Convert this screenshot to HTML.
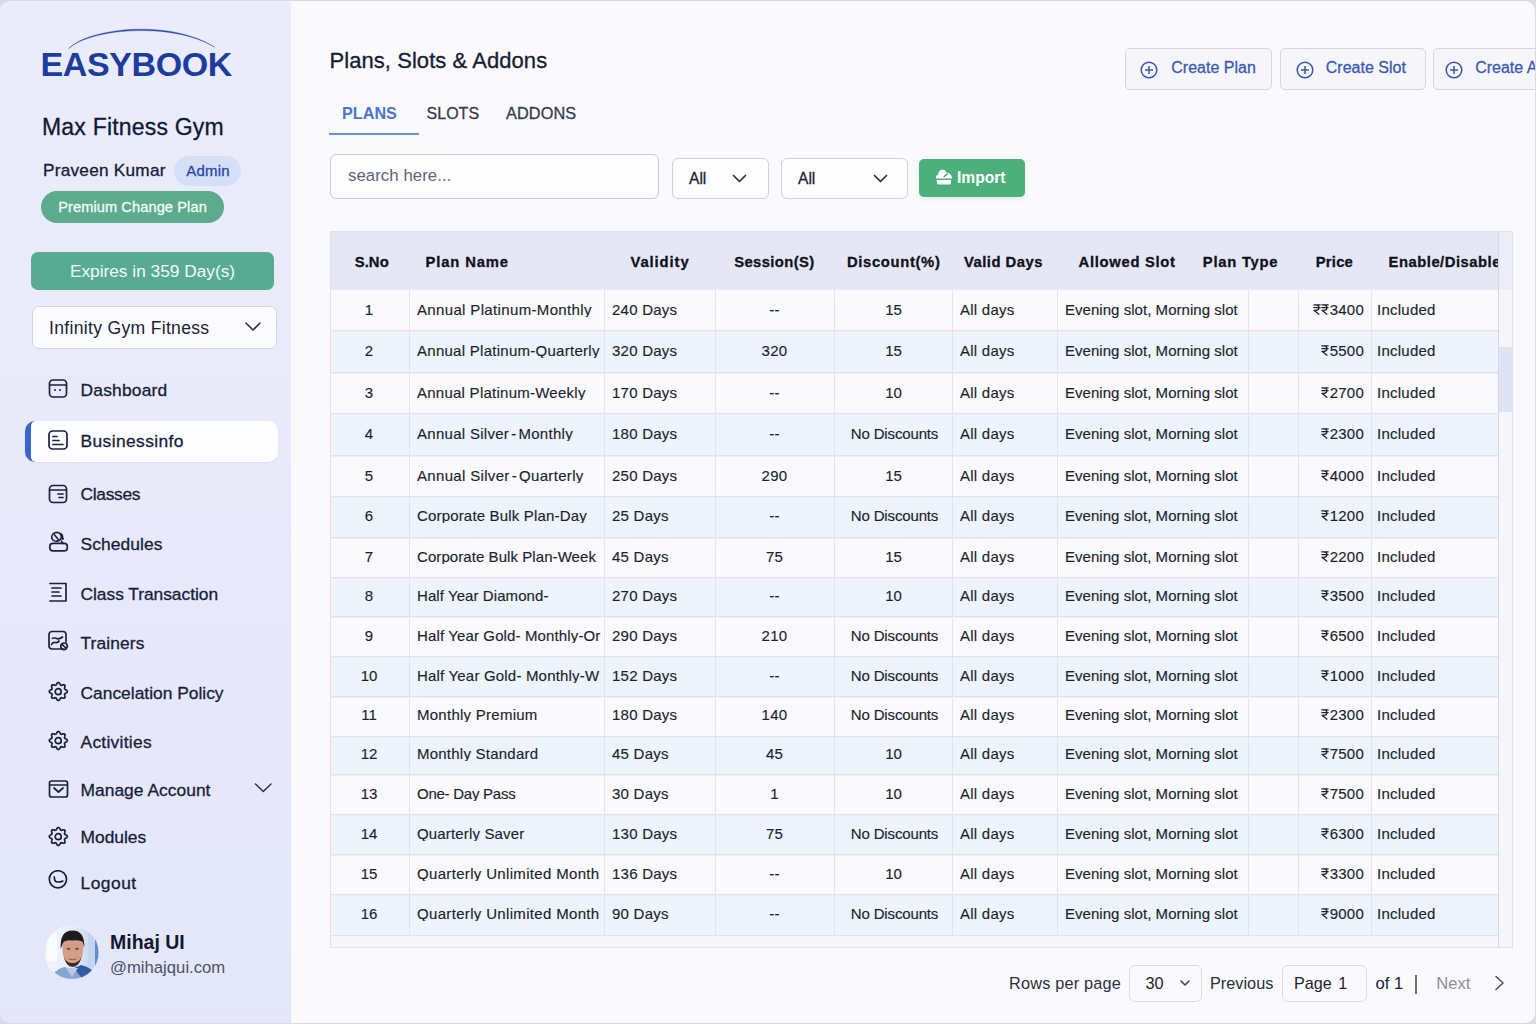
<!DOCTYPE html>
<html><head><meta charset="utf-8"><title>Plans, Slots &amp; Addons</title>
<style>
html,body{margin:0;padding:0;}
body{width:1536px;height:1024px;position:relative;overflow:hidden;background:#d9dae3;font-family:"Liberation Sans",sans-serif;}
.r{position:absolute;}
.t{position:absolute;line-height:1;white-space:pre;}
.m{-webkit-text-stroke:0.3px currentColor;}
.tb{-webkit-text-stroke:0.15px currentColor;}
.rs{display:inline-block;vertical-align:baseline;margin-right:0.5px;}
</style></head><body>
<div class="r" style="left:0;top:0;width:1536px;height:1024px;clip-path:inset(1px 1px 1px 0 round 10px);">
<div class="r" style="left:0px;top:0px;width:291px;height:1024px;background:linear-gradient(180deg,#ebecfb 0%,#e8e9fa 50%,#e3e7f9 100%);"></div>
<div class="r" style="left:291px;top:0px;width:1245px;height:1024px;background:#fafafd;"></div>
<svg class="r" style="left:60px;top:24px;" width="165" height="28" viewBox="0 0 165 28"><path d="M8.7 24.6 C 28 4, 110 -5.5, 154.8 23.2 C 110 -3.6, 28 5.6, 8.7 24.6 Z" fill="#2549a9" stroke="#2549a9" stroke-width="0.4"/></svg>
<div class="t" style="left:40.5px;top:46.80px;font-size:34px;color:#1c3d9e;font-weight:700;letter-spacing:-0.4px;">EASYBOOK</div>
<div class="t m" style="left:42.0px;top:116.10px;font-size:23px;color:#111834;letter-spacing:0.2px;">Max Fitness Gym</div>
<div class="t m" style="left:43.0px;top:161.61px;font-size:17.2px;color:#141b38;letter-spacing:0.25px;">Praveen Kumar</div>
<div class="r" style="left:174px;top:156px;width:67px;height:30px;background:#d5dff6;border-radius:15px;"></div>
<div class="t m" style="left:174.5px;top:162.61px;font-size:15px;color:#2546a6;letter-spacing:0.15px;width:67px;text-align:center;">Admin</div>
<div class="r" style="left:41px;top:191px;width:183px;height:32px;background:#5bab8c;border-radius:16px;"></div>
<div class="t m" style="left:41.0px;top:199.71px;font-size:14.6px;color:#f4fbf7;letter-spacing:0.1px;width:183px;text-align:center;">Premium Change Plan</div>
<div class="r" style="left:31px;top:252px;width:243px;height:38px;background:#58aa90;border-radius:7px;"></div>
<div class="t" style="left:31.0px;top:263.30px;font-size:17.3px;color:#f2faf6;width:243px;text-align:center;">Expires in 359 Day(s)</div>
<div class="r" style="left:32px;top:306px;width:245px;height:43px;background:#fcfcfe;border:1px solid #d3d5e2;border-radius:7px;box-sizing:border-box;"></div>
<div class="t" style="left:49.0px;top:319.51px;font-size:17.6px;color:#1a2038;letter-spacing:0.3px;">Infinity Gym Fitness</div>
<svg class="r" style="left:244px;top:320px;" width="20" height="14" viewBox="0 0 20 14"><path d="M2 3 L9 10 L16 3" fill="none" stroke="#2a3150" stroke-width="1.6" stroke-linecap="round" stroke-linejoin="round"/></svg>
<div class="r" style="left:25px;top:421px;width:253px;height:41px;background:#fdfdff;border-radius:10px;box-shadow:0 1px 2px rgba(120,130,180,0.12);"></div>
<div class="r" style="left:25px;top:421px;width:11px;height:41px;background:#3a64c8;border-radius:10px 0 0 10px;"></div>
<div class="r" style="left:31px;top:421px;width:9px;height:41px;background:#fdfdff;border-radius:5px 0 0 5px;"></div>
<div class="t m" style="left:80.5px;top:382.00px;font-size:17.4px;color:#161d3b;letter-spacing:0.2px;">Dashboard</div>
<div class="t m" style="left:80.5px;top:433.31px;font-size:17.4px;color:#161d3b;letter-spacing:0.4px;">Businessinfo</div>
<div class="t m" style="left:80.5px;top:486.00px;font-size:17.4px;color:#161d3b;letter-spacing:-0.3px;">Classes</div>
<div class="t m" style="left:80.5px;top:535.70px;font-size:17.4px;color:#161d3b;letter-spacing:0.08px;">Schedules</div>
<div class="t m" style="left:80.5px;top:586.20px;font-size:17.4px;color:#161d3b;letter-spacing:-0.04px;">Class Transaction</div>
<div class="t m" style="left:80.5px;top:634.61px;font-size:17.4px;color:#161d3b;letter-spacing:0.12px;">Trainers</div>
<div class="t m" style="left:80.5px;top:684.50px;font-size:17.4px;color:#161d3b;">Cancelation Policy</div>
<div class="t m" style="left:80.5px;top:733.50px;font-size:17.4px;color:#161d3b;letter-spacing:0.28px;">Activities</div>
<div class="t m" style="left:80.5px;top:781.81px;font-size:17.4px;color:#161d3b;letter-spacing:0.03px;">Manage Account</div>
<div class="t m" style="left:80.5px;top:829.31px;font-size:17.4px;color:#161d3b;">Modules</div>
<div class="t m" style="left:80.5px;top:874.91px;font-size:17.4px;color:#161d3b;letter-spacing:0.5px;">Logout</div>
<svg class="r" style="left:47px;top:378px;" width="24" height="22" viewBox="0 0 24 22"><rect x="2.5" y="2" width="17" height="17" rx="3.5" fill="none" stroke="#1a2140" stroke-width="1.7" stroke-linecap="round" stroke-linejoin="round"/><line x1="3" y1="7" x2="19" y2="7" fill="none" stroke="#1a2140" stroke-width="1.7" stroke-linecap="round" stroke-linejoin="round"/><circle cx="8" cy="12" r="1" fill="#1a2140"/><circle cx="13" cy="12" r="1" fill="#1a2140"/></svg>
<svg class="r" style="left:47px;top:429px;" width="24" height="22" viewBox="0 0 24 22"><rect x="2" y="2" width="18" height="18" rx="3.5" fill="none" stroke="#1a2140" stroke-width="1.7" stroke-linecap="round" stroke-linejoin="round"/><line x1="6" y1="7.5" x2="10" y2="7.5" fill="none" stroke="#1a2140" stroke-width="1.7" stroke-linecap="round" stroke-linejoin="round"/><line x1="6" y1="11.5" x2="12" y2="11.5" fill="none" stroke="#1a2140" stroke-width="1.7" stroke-linecap="round" stroke-linejoin="round"/><line x1="6" y1="15.5" x2="16" y2="15.5" fill="none" stroke="#1a2140" stroke-width="1.7" stroke-linecap="round" stroke-linejoin="round"/></svg>
<svg class="r" style="left:47px;top:483px;" width="24" height="22" viewBox="0 0 24 22"><rect x="2.5" y="2.5" width="17" height="17" rx="3.5" fill="none" stroke="#1a2140" stroke-width="1.7" stroke-linecap="round" stroke-linejoin="round"/><line x1="3" y1="7" x2="19" y2="7" fill="none" stroke="#1a2140" stroke-width="1.7" stroke-linecap="round" stroke-linejoin="round"/><line x1="11" y1="11" x2="16" y2="11" fill="none" stroke="#1a2140" stroke-width="1.7" stroke-linecap="round" stroke-linejoin="round"/><line x1="12" y1="14.5" x2="16" y2="14.5" fill="none" stroke="#1a2140" stroke-width="1.7" stroke-linecap="round" stroke-linejoin="round"/></svg>
<svg class="r" style="left:47px;top:531px;" width="24" height="22" viewBox="0 0 24 22"><ellipse cx="9.5" cy="5.8" rx="4.8" ry="4.3" transform="rotate(-20 9.5 5.8)" fill="none" stroke="#1a2140" stroke-width="1.7" stroke-linecap="round" stroke-linejoin="round"/><path d="M7.5 4 L11 8" fill="none" stroke="#1a2140" stroke-width="1.7" stroke-linecap="round" stroke-linejoin="round"/><path d="M13 2.5 Q15.3 3 15.5 5.5 L15.5 7.5" fill="none" stroke="#1a2140" stroke-width="1.7" stroke-linecap="round" stroke-linejoin="round"/><circle cx="15.6" cy="7.8" r="1.3" fill="#1a2140"/><path d="M14.5 10.2 L15.8 12.5" fill="none" stroke="#1a2140" stroke-width="1.7" stroke-linecap="round" stroke-linejoin="round"/><rect x="2.8" y="12.3" width="17.5" height="7.6" rx="3.2" fill="none" stroke="#1a2140" stroke-width="1.7" stroke-linecap="round" stroke-linejoin="round"/></svg>
<svg class="r" style="left:47px;top:581px;" width="24" height="22" viewBox="0 0 24 22"><path d="M3 2.5 H19 V20 H3" fill="none" stroke="#1a2140" stroke-width="1.7" stroke-linecap="round" stroke-linejoin="round"/><line x1="5" y1="7" x2="14" y2="7" fill="none" stroke="#1a2140" stroke-width="1.7" stroke-linecap="round" stroke-linejoin="round"/><line x1="5" y1="11" x2="12" y2="11" fill="none" stroke="#1a2140" stroke-width="1.7" stroke-linecap="round" stroke-linejoin="round"/><line x1="5" y1="15" x2="14" y2="15" fill="none" stroke="#1a2140" stroke-width="1.7" stroke-linecap="round" stroke-linejoin="round"/></svg>
<svg class="r" style="left:47px;top:630px;" width="24" height="22" viewBox="0 0 24 22"><path d="M16 19 H5 a3 3 0 0 1 -3 -3 V4.5 a3 3 0 0 1 3 -3 H16 a3 3 0 0 1 3 3 V12" fill="none" stroke="#1a2140" stroke-width="1.7" stroke-linecap="round" stroke-linejoin="round"/><path d="M5.5 8.3 Q8 7.5 10.5 8.8 Q13 9 15.5 7" fill="none" stroke="#1a2140" stroke-width="1.7" stroke-linecap="round" stroke-linejoin="round"/><path d="M4.5 14.5 Q5.5 12 8.5 12.5 Q11 13 12 11" fill="none" stroke="#1a2140" stroke-width="1.7" stroke-linecap="round" stroke-linejoin="round"/><circle cx="17" cy="16.3" r="3.3" fill="none" stroke="#1a2140" stroke-width="1.7" stroke-linecap="round" stroke-linejoin="round"/><line x1="15.3" y1="14.6" x2="18.8" y2="18" fill="none" stroke="#1a2140" stroke-width="1.7" stroke-linecap="round" stroke-linejoin="round"/></svg>
<svg class="r" style="left:47px;top:681px;" width="24" height="22" viewBox="0 0 24 22"><path d="M11.30 1.45 L11.88 1.62 L12.41 2.10 L12.84 2.75 L13.20 3.42 L13.52 3.96 L13.88 4.26 L14.35 4.31 L14.96 4.16 L15.69 3.93 L16.46 3.78 L17.17 3.81 L17.70 4.10 L17.99 4.63 L18.02 5.34 L17.87 6.11 L17.64 6.84 L17.49 7.45 L17.54 7.92 L17.84 8.28 L18.38 8.60 L19.05 8.96 L19.70 9.39 L20.18 9.92 L20.35 10.50 L20.18 11.08 L19.70 11.61 L19.05 12.04 L18.38 12.40 L17.84 12.72 L17.54 13.08 L17.49 13.55 L17.64 14.16 L17.87 14.89 L18.02 15.66 L17.99 16.37 L17.70 16.90 L17.17 17.19 L16.46 17.22 L15.69 17.07 L14.96 16.84 L14.35 16.69 L13.88 16.74 L13.52 17.04 L13.20 17.58 L12.84 18.25 L12.41 18.90 L11.88 19.38 L11.30 19.55 L10.72 19.38 L10.19 18.90 L9.76 18.25 L9.40 17.58 L9.08 17.04 L8.72 16.74 L8.25 16.69 L7.64 16.84 L6.91 17.07 L6.14 17.22 L5.43 17.19 L4.90 16.90 L4.61 16.37 L4.58 15.66 L4.73 14.89 L4.96 14.16 L5.11 13.55 L5.06 13.08 L4.76 12.72 L4.22 12.40 L3.55 12.04 L2.90 11.61 L2.42 11.08 L2.25 10.50 L2.42 9.92 L2.90 9.39 L3.55 8.96 L4.22 8.60 L4.76 8.28 L5.06 7.92 L5.11 7.45 L4.96 6.84 L4.73 6.11 L4.58 5.34 L4.61 4.63 L4.90 4.10 L5.43 3.81 L6.14 3.78 L6.91 3.93 L7.64 4.16 L8.25 4.31 L8.72 4.26 L9.08 3.96 L9.40 3.42 L9.76 2.75 L10.19 2.10 L10.72 1.62 L11.30 1.45Z" fill="none" stroke="#1a2140" stroke-width="1.7" stroke-linecap="round" stroke-linejoin="round"/><circle cx="11.2" cy="10.7" r="3" fill="none" stroke="#1a2140" stroke-width="1.7" stroke-linecap="round" stroke-linejoin="round"/></svg>
<svg class="r" style="left:47px;top:730px;" width="24" height="22" viewBox="0 0 24 22"><path d="M11.30 1.45 L11.88 1.62 L12.41 2.10 L12.84 2.75 L13.20 3.42 L13.52 3.96 L13.88 4.26 L14.35 4.31 L14.96 4.16 L15.69 3.93 L16.46 3.78 L17.17 3.81 L17.70 4.10 L17.99 4.63 L18.02 5.34 L17.87 6.11 L17.64 6.84 L17.49 7.45 L17.54 7.92 L17.84 8.28 L18.38 8.60 L19.05 8.96 L19.70 9.39 L20.18 9.92 L20.35 10.50 L20.18 11.08 L19.70 11.61 L19.05 12.04 L18.38 12.40 L17.84 12.72 L17.54 13.08 L17.49 13.55 L17.64 14.16 L17.87 14.89 L18.02 15.66 L17.99 16.37 L17.70 16.90 L17.17 17.19 L16.46 17.22 L15.69 17.07 L14.96 16.84 L14.35 16.69 L13.88 16.74 L13.52 17.04 L13.20 17.58 L12.84 18.25 L12.41 18.90 L11.88 19.38 L11.30 19.55 L10.72 19.38 L10.19 18.90 L9.76 18.25 L9.40 17.58 L9.08 17.04 L8.72 16.74 L8.25 16.69 L7.64 16.84 L6.91 17.07 L6.14 17.22 L5.43 17.19 L4.90 16.90 L4.61 16.37 L4.58 15.66 L4.73 14.89 L4.96 14.16 L5.11 13.55 L5.06 13.08 L4.76 12.72 L4.22 12.40 L3.55 12.04 L2.90 11.61 L2.42 11.08 L2.25 10.50 L2.42 9.92 L2.90 9.39 L3.55 8.96 L4.22 8.60 L4.76 8.28 L5.06 7.92 L5.11 7.45 L4.96 6.84 L4.73 6.11 L4.58 5.34 L4.61 4.63 L4.90 4.10 L5.43 3.81 L6.14 3.78 L6.91 3.93 L7.64 4.16 L8.25 4.31 L8.72 4.26 L9.08 3.96 L9.40 3.42 L9.76 2.75 L10.19 2.10 L10.72 1.62 L11.30 1.45Z" fill="none" stroke="#1a2140" stroke-width="1.7" stroke-linecap="round" stroke-linejoin="round"/><circle cx="11.2" cy="10.7" r="3" fill="none" stroke="#1a2140" stroke-width="1.7" stroke-linecap="round" stroke-linejoin="round"/></svg>
<svg class="r" style="left:47px;top:778px;" width="24" height="22" viewBox="0 0 24 22"><rect x="2.5" y="3" width="18" height="16" rx="2" fill="none" stroke="#1a2140" stroke-width="1.7" stroke-linecap="round" stroke-linejoin="round"/><line x1="3" y1="7" x2="20" y2="7" fill="none" stroke="#1a2140" stroke-width="1.7" stroke-linecap="round" stroke-linejoin="round"/><path d="M7 10 l4.5 4 l4.5 -4" fill="none" stroke="#1a2140" stroke-width="1.7" stroke-linecap="round" stroke-linejoin="round"/></svg>
<svg class="r" style="left:47px;top:826px;" width="24" height="22" viewBox="0 0 24 22"><path d="M11.30 1.45 L11.88 1.62 L12.41 2.10 L12.84 2.75 L13.20 3.42 L13.52 3.96 L13.88 4.26 L14.35 4.31 L14.96 4.16 L15.69 3.93 L16.46 3.78 L17.17 3.81 L17.70 4.10 L17.99 4.63 L18.02 5.34 L17.87 6.11 L17.64 6.84 L17.49 7.45 L17.54 7.92 L17.84 8.28 L18.38 8.60 L19.05 8.96 L19.70 9.39 L20.18 9.92 L20.35 10.50 L20.18 11.08 L19.70 11.61 L19.05 12.04 L18.38 12.40 L17.84 12.72 L17.54 13.08 L17.49 13.55 L17.64 14.16 L17.87 14.89 L18.02 15.66 L17.99 16.37 L17.70 16.90 L17.17 17.19 L16.46 17.22 L15.69 17.07 L14.96 16.84 L14.35 16.69 L13.88 16.74 L13.52 17.04 L13.20 17.58 L12.84 18.25 L12.41 18.90 L11.88 19.38 L11.30 19.55 L10.72 19.38 L10.19 18.90 L9.76 18.25 L9.40 17.58 L9.08 17.04 L8.72 16.74 L8.25 16.69 L7.64 16.84 L6.91 17.07 L6.14 17.22 L5.43 17.19 L4.90 16.90 L4.61 16.37 L4.58 15.66 L4.73 14.89 L4.96 14.16 L5.11 13.55 L5.06 13.08 L4.76 12.72 L4.22 12.40 L3.55 12.04 L2.90 11.61 L2.42 11.08 L2.25 10.50 L2.42 9.92 L2.90 9.39 L3.55 8.96 L4.22 8.60 L4.76 8.28 L5.06 7.92 L5.11 7.45 L4.96 6.84 L4.73 6.11 L4.58 5.34 L4.61 4.63 L4.90 4.10 L5.43 3.81 L6.14 3.78 L6.91 3.93 L7.64 4.16 L8.25 4.31 L8.72 4.26 L9.08 3.96 L9.40 3.42 L9.76 2.75 L10.19 2.10 L10.72 1.62 L11.30 1.45Z" fill="none" stroke="#1a2140" stroke-width="1.7" stroke-linecap="round" stroke-linejoin="round"/><circle cx="11.2" cy="10.7" r="3" fill="none" stroke="#1a2140" stroke-width="1.7" stroke-linecap="round" stroke-linejoin="round"/></svg>
<svg class="r" style="left:47px;top:870px;" width="24" height="22" viewBox="0 0 24 22"><circle cx="10.9" cy="9.3" r="8.6" fill="none" stroke="#1a2140" stroke-width="1.7" stroke-linecap="round" stroke-linejoin="round"/><path d="M7.3 6.9 Q7.3 12 10.8 12 Q13 12 15.8 11.1" fill="none" stroke="#1a2140" stroke-width="1.7" stroke-linecap="round" stroke-linejoin="round"/></svg>
<svg class="r" style="left:253px;top:781px;" width="21" height="14" viewBox="0 0 21 14"><path d="M2.5 3 L10.3 10.5 L18 3" fill="none" stroke="#2a3150" stroke-width="1.5" stroke-linecap="round" stroke-linejoin="round"/></svg>
<svg class="r" style="left:44px;top:925px;" width="56" height="56" viewBox="0 0 56 56"><defs><clipPath id="av"><circle cx="28" cy="27.5" r="26.8"/></clipPath><linearGradient id="avbg" x1="0" x2="1" y1="0" y2="0"><stop offset="0" stop-color="#f4f6fc"/><stop offset="0.55" stop-color="#e3eaf7"/><stop offset="1" stop-color="#b9cdee"/></linearGradient></defs>
<g clip-path="url(#av)"><rect width="56" height="56" fill="url(#avbg)"/><rect x="3" y="8" width="10" height="28" fill="#fbfcff"/><rect x="44" y="2" width="8" height="40" fill="#c3d3f0"/><rect x="51" y="10" width="6" height="36" fill="#5d89d2"/>
<path d="M6 56 Q9 45 20 42 L28 44 L37 41 Q50 44 54 56 Z" fill="#86a4d4"/><path d="M30 43 L37 40 Q49 42 54 54 L40 56 Z" fill="#2f5ba8"/><path d="M22 43 L28 52 L34 43 Z" fill="#b9c9e2"/>
<path d="M18.3 20 Q18 39 28.5 41.8 Q39.5 39 39.4 20 Q39 13 28.8 13 Q18.7 13 18.3 20 Z" fill="#d59c88"/>
<path d="M20 32 Q22 41.5 28.5 42 Q35.5 41.5 37.5 32 Q35 38 28.5 38 Q22 38 20 32 Z" fill="#3b2a26"/>
<path d="M16.8 24 Q15.5 5.6 28.5 5.6 Q41 5.6 40.2 23 Q39.5 18 38.2 16.5 Q33 14.5 28.5 15.5 Q22 14.8 19.5 17 Q18 20 16.8 24 Z" fill="#1f1a1b"/>
<ellipse cx="24.5" cy="23.8" rx="2" ry="1" fill="#6a4a40"/><ellipse cx="33" cy="23.8" rx="2" ry="1" fill="#6a4a40"/><path d="M25 34 Q28.5 35.5 32 34" stroke="#8a5548" stroke-width="1" fill="none"/></g>
<circle cx="28" cy="27.5" r="26.8" fill="none" stroke="#ffffff" stroke-opacity="0.5" stroke-width="0.8"/></svg>
<div class="t" style="left:110.0px;top:933.01px;font-size:19.5px;color:#121830;font-weight:700;">Mihaj UI</div>
<div class="t" style="left:110.0px;top:960.00px;font-size:16.7px;color:#4b5068;">@mihajqui.com</div>
<div class="t m" style="left:329.5px;top:50.31px;font-size:22px;color:#171c30;letter-spacing:0.06px;">Plans, Slots &amp; Addons</div>
<div class="t" style="left:342.0px;top:104.71px;font-size:16.2px;color:#4a77c9;font-weight:700;">PLANS</div>
<div class="t m" style="left:426.6px;top:105.81px;font-size:16px;color:#373c4c;">SLOTS</div>
<div class="t m" style="left:506.0px;top:104.80px;font-size:16.3px;color:#373c4c;letter-spacing:0.1px;">ADDONS</div>
<div class="r" style="left:329px;top:133px;width:90px;height:2px;background:#6a92d6;"></div>
<div class="r" style="left:1125px;top:48px;width:147px;height:42px;background:#f6f6fa;border:1px solid #d4d5dd;border-radius:5px;box-sizing:border-box;"></div>
<svg class="r" style="left:1139.4px;top:59px;" width="20.0" height="22" viewBox="0 0 20.0 22"><circle cx="10" cy="11" r="7.8" fill="none" stroke="#3456ac" stroke-width="1.5"/><line x1="10" y1="7" x2="10" y2="15" stroke="#3456ac" stroke-width="1.5"/><line x1="6" y1="11" x2="14" y2="11" stroke="#3456ac" stroke-width="1.5"/></svg>
<div class="t m" style="left:1171.3px;top:60.01px;font-size:16px;color:#3a5bb0;">Create Plan</div>
<div class="r" style="left:1280px;top:48px;width:146px;height:42px;background:#f6f6fa;border:1px solid #d4d5dd;border-radius:5px;box-sizing:border-box;"></div>
<svg class="r" style="left:1294.5px;top:59px;" width="20.0" height="22" viewBox="0 0 20.0 22"><circle cx="10" cy="11" r="7.8" fill="none" stroke="#3456ac" stroke-width="1.5"/><line x1="10" y1="7" x2="10" y2="15" stroke="#3456ac" stroke-width="1.5"/><line x1="6" y1="11" x2="14" y2="11" stroke="#3456ac" stroke-width="1.5"/></svg>
<div class="t m" style="left:1325.8px;top:60.01px;font-size:16px;color:#3a5bb0;">Create Slot</div>
<div class="r" style="left:1433px;top:48px;width:127px;height:42px;background:#f6f6fa;border:1px solid #d4d5dd;border-radius:5px;box-sizing:border-box;"></div>
<svg class="r" style="left:1443.5px;top:59px;" width="20.0" height="22" viewBox="0 0 20.0 22"><circle cx="10" cy="11" r="7.8" fill="none" stroke="#3456ac" stroke-width="1.5"/><line x1="10" y1="7" x2="10" y2="15" stroke="#3456ac" stroke-width="1.5"/><line x1="6" y1="11" x2="14" y2="11" stroke="#3456ac" stroke-width="1.5"/></svg>
<div class="t m" style="left:1475.2px;top:60.01px;font-size:16px;color:#3a5bb0;">Create A</div>
<div class="r" style="left:330px;top:154px;width:329px;height:45px;background:#fdfdfe;border:1px solid #c7cad3;border-radius:6px;box-sizing:border-box;"></div>
<div class="t" style="left:348.0px;top:168.01px;font-size:16.8px;color:#5d6578;letter-spacing:0.05px;">search here...</div>
<div class="r" style="left:672px;top:158px;width:97px;height:41px;background:#fdfdfe;border:1px solid #cfd1d9;border-radius:6px;box-sizing:border-box;"></div>
<div class="t m" style="left:689.0px;top:171.01px;font-size:15.6px;color:#1e2233;">All</div>
<svg class="r" style="left:731px;top:172px;" width="17" height="13" viewBox="0 0 17 13"><path d="M2.5 3.5 L8.5 9.5 L14.5 3.5" fill="none" stroke="#2a2f40" stroke-width="1.7" stroke-linecap="round" stroke-linejoin="round"/></svg>
<div class="r" style="left:781px;top:158px;width:127px;height:41px;background:#fdfdfe;border:1px solid #cfd1d9;border-radius:6px;box-sizing:border-box;"></div>
<div class="t m" style="left:798.0px;top:171.01px;font-size:15.6px;color:#1e2233;">All</div>
<svg class="r" style="left:872px;top:172px;" width="17" height="13" viewBox="0 0 17 13"><path d="M2.5 3.5 L8.5 9.5 L14.5 3.5" fill="none" stroke="#2a2f40" stroke-width="1.7" stroke-linecap="round" stroke-linejoin="round"/></svg>
<div class="r" style="left:919px;top:159px;width:106px;height:38px;background:#4daf7b;border-radius:5px;box-shadow:0 2px 4px rgba(77,175,123,0.18);"></div>
<svg class="r" style="left:934px;top:167px;" width="20" height="20" viewBox="0 0 20 20"><path d="M2 11.6 L2 9.8 Q2 7.9 4.1 7.9 Q4.6 2.8 8.6 2.8 Q11.6 2.8 12.6 5.8 Q17.6 6.3 17.9 10.3 L17.9 11.6 Z" fill="#fff"/><line x1="10.2" y1="9.6" x2="13.4" y2="7.1" stroke="#3f8f66" stroke-width="1.3" stroke-linecap="round"/><path d="M2.2 13.1 H17 V16 Q17 17.5 15.5 17.5 H4.6 Q3.2 17.5 3.1 16 L3 14.6 L2.2 13.1 Z" fill="#fff"/></svg>
<div class="t" style="left:957.0px;top:169.90px;font-size:15.6px;color:#ffffff;font-weight:700;">Import</div>
<div class="r" style="left:330px;top:231px;width:1183px;height:717px;background:#f6f6fa;border:1px solid #e0e2e9;box-sizing:border-box;"></div>
<div class="r" style="left:331px;top:232px;width:1167px;height:58px;background:#e5e7f5;"></div>
<div class="r" style="left:1498px;top:232px;width:14px;height:58px;background:#eceef7;"></div>
<div class="r" style="left:1498px;top:232px;width:1px;height:715px;background:#d5d8e4;"></div>
<div class="r" style="left:1499px;top:347px;width:13px;height:65px;background:#dfe4f5;"></div>
<div class="r" style="left:331px;top:290px;width:1167px;height:40px;background:#fafafd;"></div>
<div class="r" style="left:331px;top:330px;width:1167px;height:42px;background:#eef4fc;"></div>
<div class="r" style="left:331px;top:372px;width:1167px;height:41px;background:#fafafd;"></div>
<div class="r" style="left:331px;top:413px;width:1167px;height:42px;background:#eef4fc;"></div>
<div class="r" style="left:331px;top:455px;width:1167px;height:41px;background:#fafafd;"></div>
<div class="r" style="left:331px;top:496px;width:1167px;height:41px;background:#eef4fc;"></div>
<div class="r" style="left:331px;top:537px;width:1167px;height:40px;background:#fafafd;"></div>
<div class="r" style="left:331px;top:577px;width:1167px;height:39px;background:#eef4fc;"></div>
<div class="r" style="left:331px;top:616px;width:1167px;height:40px;background:#fafafd;"></div>
<div class="r" style="left:331px;top:656px;width:1167px;height:40px;background:#eef4fc;"></div>
<div class="r" style="left:331px;top:696px;width:1167px;height:40px;background:#fafafd;"></div>
<div class="r" style="left:331px;top:736px;width:1167px;height:38px;background:#eef4fc;"></div>
<div class="r" style="left:331px;top:774px;width:1167px;height:40px;background:#fafafd;"></div>
<div class="r" style="left:331px;top:814px;width:1167px;height:40px;background:#eef4fc;"></div>
<div class="r" style="left:331px;top:854px;width:1167px;height:40px;background:#fafafd;"></div>
<div class="r" style="left:331px;top:894px;width:1167px;height:41px;background:#eef4fc;"></div>
<div class="r" style="left:331px;top:330px;width:1167px;height:1px;background:#e1e4ec;"></div>
<div class="r" style="left:331px;top:331px;width:1167px;height:1px;background:#eceef3;"></div>
<div class="r" style="left:331px;top:372px;width:1167px;height:1px;background:#e1e4ec;"></div>
<div class="r" style="left:331px;top:373px;width:1167px;height:1px;background:#eceef3;"></div>
<div class="r" style="left:331px;top:413px;width:1167px;height:1px;background:#e1e4ec;"></div>
<div class="r" style="left:331px;top:414px;width:1167px;height:1px;background:#eceef3;"></div>
<div class="r" style="left:331px;top:455px;width:1167px;height:1px;background:#e1e4ec;"></div>
<div class="r" style="left:331px;top:456px;width:1167px;height:1px;background:#eceef3;"></div>
<div class="r" style="left:331px;top:496px;width:1167px;height:1px;background:#e1e4ec;"></div>
<div class="r" style="left:331px;top:497px;width:1167px;height:1px;background:#eceef3;"></div>
<div class="r" style="left:331px;top:537px;width:1167px;height:1px;background:#e1e4ec;"></div>
<div class="r" style="left:331px;top:538px;width:1167px;height:1px;background:#eceef3;"></div>
<div class="r" style="left:331px;top:577px;width:1167px;height:1px;background:#e1e4ec;"></div>
<div class="r" style="left:331px;top:578px;width:1167px;height:1px;background:#eceef3;"></div>
<div class="r" style="left:331px;top:616px;width:1167px;height:1px;background:#e1e4ec;"></div>
<div class="r" style="left:331px;top:617px;width:1167px;height:1px;background:#eceef3;"></div>
<div class="r" style="left:331px;top:656px;width:1167px;height:1px;background:#e1e4ec;"></div>
<div class="r" style="left:331px;top:657px;width:1167px;height:1px;background:#eceef3;"></div>
<div class="r" style="left:331px;top:696px;width:1167px;height:1px;background:#e1e4ec;"></div>
<div class="r" style="left:331px;top:697px;width:1167px;height:1px;background:#eceef3;"></div>
<div class="r" style="left:331px;top:736px;width:1167px;height:1px;background:#e1e4ec;"></div>
<div class="r" style="left:331px;top:737px;width:1167px;height:1px;background:#eceef3;"></div>
<div class="r" style="left:331px;top:774px;width:1167px;height:1px;background:#e1e4ec;"></div>
<div class="r" style="left:331px;top:775px;width:1167px;height:1px;background:#eceef3;"></div>
<div class="r" style="left:331px;top:814px;width:1167px;height:1px;background:#e1e4ec;"></div>
<div class="r" style="left:331px;top:815px;width:1167px;height:1px;background:#eceef3;"></div>
<div class="r" style="left:331px;top:854px;width:1167px;height:1px;background:#e1e4ec;"></div>
<div class="r" style="left:331px;top:855px;width:1167px;height:1px;background:#eceef3;"></div>
<div class="r" style="left:331px;top:894px;width:1167px;height:1px;background:#e1e4ec;"></div>
<div class="r" style="left:331px;top:895px;width:1167px;height:1px;background:#eceef3;"></div>
<div class="r" style="left:331px;top:935px;width:1167px;height:1px;background:#e1e4ec;"></div>
<div class="r" style="left:331px;top:936px;width:1167px;height:1px;background:#eceef3;"></div>
<div class="r" style="left:331px;top:936px;width:1167px;height:11px;background:#f7f7fa;"></div>
<div class="r" style="left:409px;top:290px;width:1px;height:645px;background:#e3e5ee;"></div>
<div class="r" style="left:604px;top:290px;width:1px;height:645px;background:#e3e5ee;"></div>
<div class="r" style="left:715px;top:290px;width:1px;height:645px;background:#e3e5ee;"></div>
<div class="r" style="left:834px;top:290px;width:1px;height:645px;background:#e3e5ee;"></div>
<div class="r" style="left:952px;top:290px;width:1px;height:645px;background:#e3e5ee;"></div>
<div class="r" style="left:1057px;top:290px;width:1px;height:645px;background:#e3e5ee;"></div>
<div class="r" style="left:1248px;top:290px;width:1px;height:645px;background:#e3e5ee;"></div>
<div class="r" style="left:1298px;top:290px;width:1px;height:645px;background:#e3e5ee;"></div>
<div class="r" style="left:1371px;top:290px;width:1px;height:645px;background:#e3e5ee;"></div>
<div class="r" style="left:409px;top:232px;width:1px;height:58px;background:#e2e4f1;"></div>
<div class="r" style="left:604px;top:232px;width:1px;height:58px;background:#e2e4f1;"></div>
<div class="r" style="left:715px;top:232px;width:1px;height:58px;background:#e2e4f1;"></div>
<div class="r" style="left:834px;top:232px;width:1px;height:58px;background:#e2e4f1;"></div>
<div class="r" style="left:952px;top:232px;width:1px;height:58px;background:#e2e4f1;"></div>
<div class="r" style="left:1057px;top:232px;width:1px;height:58px;background:#e2e4f1;"></div>
<div class="t m" style="left:354.7px;top:254.71px;font-size:14.8px;color:#0f111c;font-weight:700;letter-spacing:0.1px;">S.No</div>
<div class="t m" style="left:425.6px;top:254.71px;font-size:14.8px;color:#0f111c;font-weight:700;letter-spacing:0.85px;">Plan Name</div>
<div class="t m" style="left:630.5px;top:254.71px;font-size:14.8px;color:#0f111c;font-weight:700;letter-spacing:0.9px;">Validity</div>
<div class="t m" style="left:734.2px;top:254.71px;font-size:14.8px;color:#0f111c;font-weight:700;letter-spacing:0.4px;">Session(S)</div>
<div class="t m" style="left:847.0px;top:254.71px;font-size:14.8px;color:#0f111c;font-weight:700;letter-spacing:0.65px;">Discount(%)</div>
<div class="t m" style="left:963.9px;top:254.71px;font-size:14.8px;color:#0f111c;font-weight:700;letter-spacing:0.5px;">Valid Days</div>
<div class="t m" style="left:1078.5px;top:254.71px;font-size:14.8px;color:#0f111c;font-weight:700;letter-spacing:0.7px;">Allowed Slot</div>
<div class="t m" style="left:1202.8px;top:254.71px;font-size:14.8px;color:#0f111c;font-weight:700;letter-spacing:0.75px;">Plan Type</div>
<div class="t m" style="left:1315.8px;top:254.71px;font-size:14.8px;color:#0f111c;font-weight:700;letter-spacing:0.2px;">Price</div>
<div class="r" style="left:1388px;top:240px;width:110px;height:40px;overflow:hidden;">
<div class="t m" style="left:0.6px;top:14.71px;font-size:14.8px;color:#0f111c;font-weight:700;letter-spacing:0.5px;">Enable/Disable</div>
</div>
<div class="t tb" style="left:330.0px;top:301.81px;font-size:15px;color:#1b1f2e;width:78px;text-align:center;">1</div>
<div class="t tb" style="left:417.0px;top:301.81px;font-size:15px;color:#1b1f2e;letter-spacing:0.35px;white-space:nowrap;overflow:hidden;width:186px;">Annual Platinum-Monthly</div>
<div class="t tb" style="left:612.0px;top:301.81px;font-size:15px;color:#1b1f2e;letter-spacing:0.25px;">240 Days</div>
<div class="t tb" style="left:715.0px;top:301.81px;font-size:15px;color:#1b1f2e;letter-spacing:0.25px;width:119px;text-align:center;">--</div>
<div class="t tb" style="left:834.5px;top:301.81px;font-size:15px;color:#1b1f2e;width:118px;text-align:center;">15</div>
<div class="t tb" style="left:960.0px;top:301.81px;font-size:15px;color:#1b1f2e;letter-spacing:0.25px;">All days</div>
<div class="t tb" style="left:1065.0px;top:301.81px;font-size:15px;color:#1b1f2e;letter-spacing:0.04px;">Evening slot, Morning slot</div>
<div class="t tb" style="left:1200.0px;top:301.81px;font-size:15px;color:#1b1f2e;letter-spacing:0.25px;width:164px;text-align:right;"><svg class="rs" width="8" height="11" viewBox="0 0 8 11"><path d="M0.4 0.8 H7.6 M0.4 3.7 H7.6 M0.4 0.8 H2.6 Q5.9 0.8 5.9 3.7 Q5.9 6.3 2.6 6.3 H0.9 L6.3 10.5" fill="none" stroke="#1d2130" stroke-width="1.25" stroke-linejoin="round"/></svg><svg class="rs" width="8" height="11" viewBox="0 0 8 11"><path d="M0.4 0.8 H7.6 M0.4 3.7 H7.6 M0.4 0.8 H2.6 Q5.9 0.8 5.9 3.7 Q5.9 6.3 2.6 6.3 H0.9 L6.3 10.5" fill="none" stroke="#1d2130" stroke-width="1.25" stroke-linejoin="round"/></svg>3400</div>
<div class="t tb" style="left:1377.0px;top:301.81px;font-size:15px;color:#1b1f2e;letter-spacing:0.25px;">Included</div>
<div class="t tb" style="left:330.0px;top:343.31px;font-size:15px;color:#1b1f2e;width:78px;text-align:center;">2</div>
<div class="t tb" style="left:417.0px;top:343.31px;font-size:15px;color:#1b1f2e;letter-spacing:0.27px;white-space:nowrap;overflow:hidden;width:186px;">Annual Platinum-Quarterly</div>
<div class="t tb" style="left:612.0px;top:343.31px;font-size:15px;color:#1b1f2e;letter-spacing:0.25px;">320 Days</div>
<div class="t tb" style="left:715.0px;top:343.31px;font-size:15px;color:#1b1f2e;letter-spacing:0.25px;width:119px;text-align:center;">320</div>
<div class="t tb" style="left:834.5px;top:343.31px;font-size:15px;color:#1b1f2e;width:118px;text-align:center;">15</div>
<div class="t tb" style="left:960.0px;top:343.31px;font-size:15px;color:#1b1f2e;letter-spacing:0.25px;">All days</div>
<div class="t tb" style="left:1065.0px;top:343.31px;font-size:15px;color:#1b1f2e;letter-spacing:0.04px;">Evening slot, Morning slot</div>
<div class="t tb" style="left:1200.0px;top:343.31px;font-size:15px;color:#1b1f2e;letter-spacing:0.25px;width:164px;text-align:right;"><svg class="rs" width="8" height="11" viewBox="0 0 8 11"><path d="M0.4 0.8 H7.6 M0.4 3.7 H7.6 M0.4 0.8 H2.6 Q5.9 0.8 5.9 3.7 Q5.9 6.3 2.6 6.3 H0.9 L6.3 10.5" fill="none" stroke="#1d2130" stroke-width="1.25" stroke-linejoin="round"/></svg>5500</div>
<div class="t tb" style="left:1377.0px;top:343.31px;font-size:15px;color:#1b1f2e;letter-spacing:0.25px;">Included</div>
<div class="t tb" style="left:330.0px;top:385.11px;font-size:15px;color:#1b1f2e;width:78px;text-align:center;">3</div>
<div class="t tb" style="left:417.0px;top:385.11px;font-size:15px;color:#1b1f2e;letter-spacing:0.25px;white-space:nowrap;overflow:hidden;width:186px;">Annual Platinum-Weekly</div>
<div class="t tb" style="left:612.0px;top:385.11px;font-size:15px;color:#1b1f2e;letter-spacing:0.25px;">170 Days</div>
<div class="t tb" style="left:715.0px;top:385.11px;font-size:15px;color:#1b1f2e;letter-spacing:0.25px;width:119px;text-align:center;">--</div>
<div class="t tb" style="left:834.5px;top:385.11px;font-size:15px;color:#1b1f2e;width:118px;text-align:center;">10</div>
<div class="t tb" style="left:960.0px;top:385.11px;font-size:15px;color:#1b1f2e;letter-spacing:0.25px;">All days</div>
<div class="t tb" style="left:1065.0px;top:385.11px;font-size:15px;color:#1b1f2e;letter-spacing:0.04px;">Evening slot, Morning slot</div>
<div class="t tb" style="left:1200.0px;top:385.11px;font-size:15px;color:#1b1f2e;letter-spacing:0.25px;width:164px;text-align:right;"><svg class="rs" width="8" height="11" viewBox="0 0 8 11"><path d="M0.4 0.8 H7.6 M0.4 3.7 H7.6 M0.4 0.8 H2.6 Q5.9 0.8 5.9 3.7 Q5.9 6.3 2.6 6.3 H0.9 L6.3 10.5" fill="none" stroke="#1d2130" stroke-width="1.25" stroke-linejoin="round"/></svg>2700</div>
<div class="t tb" style="left:1377.0px;top:385.11px;font-size:15px;color:#1b1f2e;letter-spacing:0.25px;">Included</div>
<div class="t tb" style="left:330.0px;top:426.31px;font-size:15px;color:#1b1f2e;width:78px;text-align:center;">4</div>
<div class="t tb" style="left:417.0px;top:426.31px;font-size:15px;color:#1b1f2e;letter-spacing:0.29px;white-space:nowrap;overflow:hidden;width:186px;">Annual Silver<span style="margin:0 2px">-</span>Monthly</div>
<div class="t tb" style="left:612.0px;top:426.31px;font-size:15px;color:#1b1f2e;letter-spacing:0.25px;">180 Days</div>
<div class="t tb" style="left:715.0px;top:426.31px;font-size:15px;color:#1b1f2e;letter-spacing:0.25px;width:119px;text-align:center;">--</div>
<div class="t tb" style="left:835.5px;top:426.31px;font-size:15px;color:#1b1f2e;letter-spacing:-0.15px;width:118px;text-align:center;">No Discounts</div>
<div class="t tb" style="left:960.0px;top:426.31px;font-size:15px;color:#1b1f2e;letter-spacing:0.25px;">All days</div>
<div class="t tb" style="left:1065.0px;top:426.31px;font-size:15px;color:#1b1f2e;letter-spacing:0.04px;">Evening slot, Morning slot</div>
<div class="t tb" style="left:1200.0px;top:426.31px;font-size:15px;color:#1b1f2e;letter-spacing:0.25px;width:164px;text-align:right;"><svg class="rs" width="8" height="11" viewBox="0 0 8 11"><path d="M0.4 0.8 H7.6 M0.4 3.7 H7.6 M0.4 0.8 H2.6 Q5.9 0.8 5.9 3.7 Q5.9 6.3 2.6 6.3 H0.9 L6.3 10.5" fill="none" stroke="#1d2130" stroke-width="1.25" stroke-linejoin="round"/></svg>2300</div>
<div class="t tb" style="left:1377.0px;top:426.31px;font-size:15px;color:#1b1f2e;letter-spacing:0.25px;">Included</div>
<div class="t tb" style="left:330.0px;top:467.61px;font-size:15px;color:#1b1f2e;width:78px;text-align:center;">5</div>
<div class="t tb" style="left:417.0px;top:467.61px;font-size:15px;color:#1b1f2e;letter-spacing:0.33px;white-space:nowrap;overflow:hidden;width:186px;">Annual Silver<span style="margin:0 2px">-</span>Quarterly</div>
<div class="t tb" style="left:612.0px;top:467.61px;font-size:15px;color:#1b1f2e;letter-spacing:0.25px;">250 Days</div>
<div class="t tb" style="left:715.0px;top:467.61px;font-size:15px;color:#1b1f2e;letter-spacing:0.25px;width:119px;text-align:center;">290</div>
<div class="t tb" style="left:834.5px;top:467.61px;font-size:15px;color:#1b1f2e;width:118px;text-align:center;">15</div>
<div class="t tb" style="left:960.0px;top:467.61px;font-size:15px;color:#1b1f2e;letter-spacing:0.25px;">All days</div>
<div class="t tb" style="left:1065.0px;top:467.61px;font-size:15px;color:#1b1f2e;letter-spacing:0.04px;">Evening slot, Morning slot</div>
<div class="t tb" style="left:1200.0px;top:467.61px;font-size:15px;color:#1b1f2e;letter-spacing:0.25px;width:164px;text-align:right;"><svg class="rs" width="8" height="11" viewBox="0 0 8 11"><path d="M0.4 0.8 H7.6 M0.4 3.7 H7.6 M0.4 0.8 H2.6 Q5.9 0.8 5.9 3.7 Q5.9 6.3 2.6 6.3 H0.9 L6.3 10.5" fill="none" stroke="#1d2130" stroke-width="1.25" stroke-linejoin="round"/></svg>4000</div>
<div class="t tb" style="left:1377.0px;top:467.61px;font-size:15px;color:#1b1f2e;letter-spacing:0.25px;">Included</div>
<div class="t tb" style="left:330.0px;top:507.81px;font-size:15px;color:#1b1f2e;width:78px;text-align:center;">6</div>
<div class="t tb" style="left:417.0px;top:507.81px;font-size:15px;color:#1b1f2e;letter-spacing:0.17px;white-space:nowrap;overflow:hidden;width:186px;">Corporate Bulk Plan-Day</div>
<div class="t tb" style="left:612.0px;top:507.81px;font-size:15px;color:#1b1f2e;letter-spacing:0.25px;">25 Days</div>
<div class="t tb" style="left:715.0px;top:507.81px;font-size:15px;color:#1b1f2e;letter-spacing:0.25px;width:119px;text-align:center;">--</div>
<div class="t tb" style="left:835.5px;top:507.81px;font-size:15px;color:#1b1f2e;letter-spacing:-0.15px;width:118px;text-align:center;">No Discounts</div>
<div class="t tb" style="left:960.0px;top:507.81px;font-size:15px;color:#1b1f2e;letter-spacing:0.25px;">All days</div>
<div class="t tb" style="left:1065.0px;top:507.81px;font-size:15px;color:#1b1f2e;letter-spacing:0.04px;">Evening slot, Morning slot</div>
<div class="t tb" style="left:1200.0px;top:507.81px;font-size:15px;color:#1b1f2e;letter-spacing:0.25px;width:164px;text-align:right;"><svg class="rs" width="8" height="11" viewBox="0 0 8 11"><path d="M0.4 0.8 H7.6 M0.4 3.7 H7.6 M0.4 0.8 H2.6 Q5.9 0.8 5.9 3.7 Q5.9 6.3 2.6 6.3 H0.9 L6.3 10.5" fill="none" stroke="#1d2130" stroke-width="1.25" stroke-linejoin="round"/></svg>1200</div>
<div class="t tb" style="left:1377.0px;top:507.81px;font-size:15px;color:#1b1f2e;letter-spacing:0.25px;">Included</div>
<div class="t tb" style="left:330.0px;top:549.11px;font-size:15px;color:#1b1f2e;width:78px;text-align:center;">7</div>
<div class="t tb" style="left:417.0px;top:549.11px;font-size:15px;color:#1b1f2e;letter-spacing:0.07px;white-space:nowrap;overflow:hidden;width:186px;">Corporate Bulk Plan-Week</div>
<div class="t tb" style="left:612.0px;top:549.11px;font-size:15px;color:#1b1f2e;letter-spacing:0.25px;">45 Days</div>
<div class="t tb" style="left:715.0px;top:549.11px;font-size:15px;color:#1b1f2e;letter-spacing:0.25px;width:119px;text-align:center;">75</div>
<div class="t tb" style="left:834.5px;top:549.11px;font-size:15px;color:#1b1f2e;width:118px;text-align:center;">15</div>
<div class="t tb" style="left:960.0px;top:549.11px;font-size:15px;color:#1b1f2e;letter-spacing:0.25px;">All days</div>
<div class="t tb" style="left:1065.0px;top:549.11px;font-size:15px;color:#1b1f2e;letter-spacing:0.04px;">Evening slot, Morning slot</div>
<div class="t tb" style="left:1200.0px;top:549.11px;font-size:15px;color:#1b1f2e;letter-spacing:0.25px;width:164px;text-align:right;"><svg class="rs" width="8" height="11" viewBox="0 0 8 11"><path d="M0.4 0.8 H7.6 M0.4 3.7 H7.6 M0.4 0.8 H2.6 Q5.9 0.8 5.9 3.7 Q5.9 6.3 2.6 6.3 H0.9 L6.3 10.5" fill="none" stroke="#1d2130" stroke-width="1.25" stroke-linejoin="round"/></svg>2200</div>
<div class="t tb" style="left:1377.0px;top:549.11px;font-size:15px;color:#1b1f2e;letter-spacing:0.25px;">Included</div>
<div class="t tb" style="left:330.0px;top:587.91px;font-size:15px;color:#1b1f2e;width:78px;text-align:center;">8</div>
<div class="t tb" style="left:417.0px;top:587.91px;font-size:15px;color:#1b1f2e;letter-spacing:0.08px;white-space:nowrap;overflow:hidden;width:186px;">Half Year Diamond-</div>
<div class="t tb" style="left:612.0px;top:587.91px;font-size:15px;color:#1b1f2e;letter-spacing:0.25px;">270 Days</div>
<div class="t tb" style="left:715.0px;top:587.91px;font-size:15px;color:#1b1f2e;letter-spacing:0.25px;width:119px;text-align:center;">--</div>
<div class="t tb" style="left:834.5px;top:587.91px;font-size:15px;color:#1b1f2e;width:118px;text-align:center;">10</div>
<div class="t tb" style="left:960.0px;top:587.91px;font-size:15px;color:#1b1f2e;letter-spacing:0.25px;">All days</div>
<div class="t tb" style="left:1065.0px;top:587.91px;font-size:15px;color:#1b1f2e;letter-spacing:0.04px;">Evening slot, Morning slot</div>
<div class="t tb" style="left:1200.0px;top:587.91px;font-size:15px;color:#1b1f2e;letter-spacing:0.25px;width:164px;text-align:right;"><svg class="rs" width="8" height="11" viewBox="0 0 8 11"><path d="M0.4 0.8 H7.6 M0.4 3.7 H7.6 M0.4 0.8 H2.6 Q5.9 0.8 5.9 3.7 Q5.9 6.3 2.6 6.3 H0.9 L6.3 10.5" fill="none" stroke="#1d2130" stroke-width="1.25" stroke-linejoin="round"/></svg>3500</div>
<div class="t tb" style="left:1377.0px;top:587.91px;font-size:15px;color:#1b1f2e;letter-spacing:0.25px;">Included</div>
<div class="t tb" style="left:330.0px;top:627.91px;font-size:15px;color:#1b1f2e;width:78px;text-align:center;">9</div>
<div class="t tb" style="left:417.0px;top:627.91px;font-size:15px;color:#1b1f2e;letter-spacing:0.13px;white-space:nowrap;overflow:hidden;width:186px;">Half Year Gold- Monthly-Or</div>
<div class="t tb" style="left:612.0px;top:627.91px;font-size:15px;color:#1b1f2e;letter-spacing:0.25px;">290 Days</div>
<div class="t tb" style="left:715.0px;top:627.91px;font-size:15px;color:#1b1f2e;letter-spacing:0.25px;width:119px;text-align:center;">210</div>
<div class="t tb" style="left:835.5px;top:627.91px;font-size:15px;color:#1b1f2e;letter-spacing:-0.15px;width:118px;text-align:center;">No Discounts</div>
<div class="t tb" style="left:960.0px;top:627.91px;font-size:15px;color:#1b1f2e;letter-spacing:0.25px;">All days</div>
<div class="t tb" style="left:1065.0px;top:627.91px;font-size:15px;color:#1b1f2e;letter-spacing:0.04px;">Evening slot, Morning slot</div>
<div class="t tb" style="left:1200.0px;top:627.91px;font-size:15px;color:#1b1f2e;letter-spacing:0.25px;width:164px;text-align:right;"><svg class="rs" width="8" height="11" viewBox="0 0 8 11"><path d="M0.4 0.8 H7.6 M0.4 3.7 H7.6 M0.4 0.8 H2.6 Q5.9 0.8 5.9 3.7 Q5.9 6.3 2.6 6.3 H0.9 L6.3 10.5" fill="none" stroke="#1d2130" stroke-width="1.25" stroke-linejoin="round"/></svg>6500</div>
<div class="t tb" style="left:1377.0px;top:627.91px;font-size:15px;color:#1b1f2e;letter-spacing:0.25px;">Included</div>
<div class="t tb" style="left:330.0px;top:667.70px;font-size:15px;color:#1b1f2e;width:78px;text-align:center;">10</div>
<div class="t tb" style="left:417.0px;top:667.70px;font-size:15px;color:#1b1f2e;letter-spacing:0.19px;white-space:nowrap;overflow:hidden;width:186px;">Half Year Gold- Monthly-W</div>
<div class="t tb" style="left:612.0px;top:667.70px;font-size:15px;color:#1b1f2e;letter-spacing:0.25px;">152 Days</div>
<div class="t tb" style="left:715.0px;top:667.70px;font-size:15px;color:#1b1f2e;letter-spacing:0.25px;width:119px;text-align:center;">--</div>
<div class="t tb" style="left:835.5px;top:667.70px;font-size:15px;color:#1b1f2e;letter-spacing:-0.15px;width:118px;text-align:center;">No Discounts</div>
<div class="t tb" style="left:960.0px;top:667.70px;font-size:15px;color:#1b1f2e;letter-spacing:0.25px;">All days</div>
<div class="t tb" style="left:1065.0px;top:667.70px;font-size:15px;color:#1b1f2e;letter-spacing:0.04px;">Evening slot, Morning slot</div>
<div class="t tb" style="left:1200.0px;top:667.70px;font-size:15px;color:#1b1f2e;letter-spacing:0.25px;width:164px;text-align:right;"><svg class="rs" width="8" height="11" viewBox="0 0 8 11"><path d="M0.4 0.8 H7.6 M0.4 3.7 H7.6 M0.4 0.8 H2.6 Q5.9 0.8 5.9 3.7 Q5.9 6.3 2.6 6.3 H0.9 L6.3 10.5" fill="none" stroke="#1d2130" stroke-width="1.25" stroke-linejoin="round"/></svg>1000</div>
<div class="t tb" style="left:1377.0px;top:667.70px;font-size:15px;color:#1b1f2e;letter-spacing:0.25px;">Included</div>
<div class="t tb" style="left:330.0px;top:707.31px;font-size:15px;color:#1b1f2e;width:78px;text-align:center;">11</div>
<div class="t tb" style="left:417.0px;top:707.31px;font-size:15px;color:#1b1f2e;letter-spacing:0.26px;white-space:nowrap;overflow:hidden;width:186px;">Monthly Premium</div>
<div class="t tb" style="left:612.0px;top:707.31px;font-size:15px;color:#1b1f2e;letter-spacing:0.25px;">180 Days</div>
<div class="t tb" style="left:715.0px;top:707.31px;font-size:15px;color:#1b1f2e;letter-spacing:0.25px;width:119px;text-align:center;">140</div>
<div class="t tb" style="left:835.5px;top:707.31px;font-size:15px;color:#1b1f2e;letter-spacing:-0.15px;width:118px;text-align:center;">No Discounts</div>
<div class="t tb" style="left:960.0px;top:707.31px;font-size:15px;color:#1b1f2e;letter-spacing:0.25px;">All days</div>
<div class="t tb" style="left:1065.0px;top:707.31px;font-size:15px;color:#1b1f2e;letter-spacing:0.04px;">Evening slot, Morning slot</div>
<div class="t tb" style="left:1200.0px;top:707.31px;font-size:15px;color:#1b1f2e;letter-spacing:0.25px;width:164px;text-align:right;"><svg class="rs" width="8" height="11" viewBox="0 0 8 11"><path d="M0.4 0.8 H7.6 M0.4 3.7 H7.6 M0.4 0.8 H2.6 Q5.9 0.8 5.9 3.7 Q5.9 6.3 2.6 6.3 H0.9 L6.3 10.5" fill="none" stroke="#1d2130" stroke-width="1.25" stroke-linejoin="round"/></svg>2300</div>
<div class="t tb" style="left:1377.0px;top:707.31px;font-size:15px;color:#1b1f2e;letter-spacing:0.25px;">Included</div>
<div class="t tb" style="left:330.0px;top:746.31px;font-size:15px;color:#1b1f2e;width:78px;text-align:center;">12</div>
<div class="t tb" style="left:417.0px;top:746.31px;font-size:15px;color:#1b1f2e;letter-spacing:0.23px;white-space:nowrap;overflow:hidden;width:186px;">Monthly Standard</div>
<div class="t tb" style="left:612.0px;top:746.31px;font-size:15px;color:#1b1f2e;letter-spacing:0.25px;">45 Days</div>
<div class="t tb" style="left:715.0px;top:746.31px;font-size:15px;color:#1b1f2e;letter-spacing:0.25px;width:119px;text-align:center;">45</div>
<div class="t tb" style="left:834.5px;top:746.31px;font-size:15px;color:#1b1f2e;width:118px;text-align:center;">10</div>
<div class="t tb" style="left:960.0px;top:746.31px;font-size:15px;color:#1b1f2e;letter-spacing:0.25px;">All days</div>
<div class="t tb" style="left:1065.0px;top:746.31px;font-size:15px;color:#1b1f2e;letter-spacing:0.04px;">Evening slot, Morning slot</div>
<div class="t tb" style="left:1200.0px;top:746.31px;font-size:15px;color:#1b1f2e;letter-spacing:0.25px;width:164px;text-align:right;"><svg class="rs" width="8" height="11" viewBox="0 0 8 11"><path d="M0.4 0.8 H7.6 M0.4 3.7 H7.6 M0.4 0.8 H2.6 Q5.9 0.8 5.9 3.7 Q5.9 6.3 2.6 6.3 H0.9 L6.3 10.5" fill="none" stroke="#1d2130" stroke-width="1.25" stroke-linejoin="round"/></svg>7500</div>
<div class="t tb" style="left:1377.0px;top:746.31px;font-size:15px;color:#1b1f2e;letter-spacing:0.25px;">Included</div>
<div class="t tb" style="left:330.0px;top:786.11px;font-size:15px;color:#1b1f2e;width:78px;text-align:center;">13</div>
<div class="t tb" style="left:417.0px;top:786.11px;font-size:15px;color:#1b1f2e;letter-spacing:-0.25px;white-space:nowrap;overflow:hidden;width:186px;">One- Day Pass</div>
<div class="t tb" style="left:612.0px;top:786.11px;font-size:15px;color:#1b1f2e;letter-spacing:0.25px;">30 Days</div>
<div class="t tb" style="left:715.0px;top:786.11px;font-size:15px;color:#1b1f2e;letter-spacing:0.25px;width:119px;text-align:center;">1</div>
<div class="t tb" style="left:834.5px;top:786.11px;font-size:15px;color:#1b1f2e;width:118px;text-align:center;">10</div>
<div class="t tb" style="left:960.0px;top:786.11px;font-size:15px;color:#1b1f2e;letter-spacing:0.25px;">All days</div>
<div class="t tb" style="left:1065.0px;top:786.11px;font-size:15px;color:#1b1f2e;letter-spacing:0.04px;">Evening slot, Morning slot</div>
<div class="t tb" style="left:1200.0px;top:786.11px;font-size:15px;color:#1b1f2e;letter-spacing:0.25px;width:164px;text-align:right;"><svg class="rs" width="8" height="11" viewBox="0 0 8 11"><path d="M0.4 0.8 H7.6 M0.4 3.7 H7.6 M0.4 0.8 H2.6 Q5.9 0.8 5.9 3.7 Q5.9 6.3 2.6 6.3 H0.9 L6.3 10.5" fill="none" stroke="#1d2130" stroke-width="1.25" stroke-linejoin="round"/></svg>7500</div>
<div class="t tb" style="left:1377.0px;top:786.11px;font-size:15px;color:#1b1f2e;letter-spacing:0.25px;">Included</div>
<div class="t tb" style="left:330.0px;top:826.00px;font-size:15px;color:#1b1f2e;width:78px;text-align:center;">14</div>
<div class="t tb" style="left:417.0px;top:826.00px;font-size:15px;color:#1b1f2e;letter-spacing:0.16px;white-space:nowrap;overflow:hidden;width:186px;">Quarterly Saver</div>
<div class="t tb" style="left:612.0px;top:826.00px;font-size:15px;color:#1b1f2e;letter-spacing:0.25px;">130 Days</div>
<div class="t tb" style="left:715.0px;top:826.00px;font-size:15px;color:#1b1f2e;letter-spacing:0.25px;width:119px;text-align:center;">75</div>
<div class="t tb" style="left:835.5px;top:826.00px;font-size:15px;color:#1b1f2e;letter-spacing:-0.15px;width:118px;text-align:center;">No Discounts</div>
<div class="t tb" style="left:960.0px;top:826.00px;font-size:15px;color:#1b1f2e;letter-spacing:0.25px;">All days</div>
<div class="t tb" style="left:1065.0px;top:826.00px;font-size:15px;color:#1b1f2e;letter-spacing:0.04px;">Evening slot, Morning slot</div>
<div class="t tb" style="left:1200.0px;top:826.00px;font-size:15px;color:#1b1f2e;letter-spacing:0.25px;width:164px;text-align:right;"><svg class="rs" width="8" height="11" viewBox="0 0 8 11"><path d="M0.4 0.8 H7.6 M0.4 3.7 H7.6 M0.4 0.8 H2.6 Q5.9 0.8 5.9 3.7 Q5.9 6.3 2.6 6.3 H0.9 L6.3 10.5" fill="none" stroke="#1d2130" stroke-width="1.25" stroke-linejoin="round"/></svg>6300</div>
<div class="t tb" style="left:1377.0px;top:826.00px;font-size:15px;color:#1b1f2e;letter-spacing:0.25px;">Included</div>
<div class="t tb" style="left:330.0px;top:865.50px;font-size:15px;color:#1b1f2e;width:78px;text-align:center;">15</div>
<div class="t tb" style="left:417.0px;top:865.50px;font-size:15px;color:#1b1f2e;letter-spacing:0.33px;white-space:nowrap;overflow:hidden;width:186px;">Quarterly Unlimited Month</div>
<div class="t tb" style="left:612.0px;top:865.50px;font-size:15px;color:#1b1f2e;letter-spacing:0.25px;">136 Days</div>
<div class="t tb" style="left:715.0px;top:865.50px;font-size:15px;color:#1b1f2e;letter-spacing:0.25px;width:119px;text-align:center;">--</div>
<div class="t tb" style="left:834.5px;top:865.50px;font-size:15px;color:#1b1f2e;width:118px;text-align:center;">10</div>
<div class="t tb" style="left:960.0px;top:865.50px;font-size:15px;color:#1b1f2e;letter-spacing:0.25px;">All days</div>
<div class="t tb" style="left:1065.0px;top:865.50px;font-size:15px;color:#1b1f2e;letter-spacing:0.04px;">Evening slot, Morning slot</div>
<div class="t tb" style="left:1200.0px;top:865.50px;font-size:15px;color:#1b1f2e;letter-spacing:0.25px;width:164px;text-align:right;"><svg class="rs" width="8" height="11" viewBox="0 0 8 11"><path d="M0.4 0.8 H7.6 M0.4 3.7 H7.6 M0.4 0.8 H2.6 Q5.9 0.8 5.9 3.7 Q5.9 6.3 2.6 6.3 H0.9 L6.3 10.5" fill="none" stroke="#1d2130" stroke-width="1.25" stroke-linejoin="round"/></svg>3300</div>
<div class="t tb" style="left:1377.0px;top:865.50px;font-size:15px;color:#1b1f2e;letter-spacing:0.25px;">Included</div>
<div class="t tb" style="left:330.0px;top:905.91px;font-size:15px;color:#1b1f2e;width:78px;text-align:center;">16</div>
<div class="t tb" style="left:417.0px;top:905.91px;font-size:15px;color:#1b1f2e;letter-spacing:0.33px;white-space:nowrap;overflow:hidden;width:186px;">Quarterly Unlimited Month</div>
<div class="t tb" style="left:612.0px;top:905.91px;font-size:15px;color:#1b1f2e;letter-spacing:0.25px;">90 Days</div>
<div class="t tb" style="left:715.0px;top:905.91px;font-size:15px;color:#1b1f2e;letter-spacing:0.25px;width:119px;text-align:center;">--</div>
<div class="t tb" style="left:835.5px;top:905.91px;font-size:15px;color:#1b1f2e;letter-spacing:-0.15px;width:118px;text-align:center;">No Discounts</div>
<div class="t tb" style="left:960.0px;top:905.91px;font-size:15px;color:#1b1f2e;letter-spacing:0.25px;">All days</div>
<div class="t tb" style="left:1065.0px;top:905.91px;font-size:15px;color:#1b1f2e;letter-spacing:0.04px;">Evening slot, Morning slot</div>
<div class="t tb" style="left:1200.0px;top:905.91px;font-size:15px;color:#1b1f2e;letter-spacing:0.25px;width:164px;text-align:right;"><svg class="rs" width="8" height="11" viewBox="0 0 8 11"><path d="M0.4 0.8 H7.6 M0.4 3.7 H7.6 M0.4 0.8 H2.6 Q5.9 0.8 5.9 3.7 Q5.9 6.3 2.6 6.3 H0.9 L6.3 10.5" fill="none" stroke="#1d2130" stroke-width="1.25" stroke-linejoin="round"/></svg>9000</div>
<div class="t tb" style="left:1377.0px;top:905.91px;font-size:15px;color:#1b1f2e;letter-spacing:0.25px;">Included</div>
<div class="t" style="left:1009.0px;top:975.30px;font-size:16.3px;color:#2a2f40;letter-spacing:0.2px;">Rows per page</div>
<div class="r" style="left:1129px;top:965px;width:73px;height:37px;background:#fafafc;border:1px solid #d8dae2;border-radius:6px;box-sizing:border-box;"></div>
<div class="t" style="left:1145.5px;top:975.30px;font-size:16.3px;color:#1e2233;">30</div>
<svg class="r" style="left:1177px;top:977px;" width="16" height="12" viewBox="0 0 16 12"><path d="M4 4 L8 8 L12 4" fill="none" stroke="#3a4050" stroke-width="1.6" stroke-linecap="round" stroke-linejoin="round"/></svg>
<div class="t" style="left:1210.0px;top:975.30px;font-size:16.3px;color:#2a2f40;">Previous</div>
<div class="r" style="left:1282px;top:965px;width:85px;height:37px;background:#fafafc;border:1px solid #d8dae2;border-radius:6px;box-sizing:border-box;"></div>
<div class="t" style="left:1294.0px;top:975.31px;font-size:16.2px;color:#1e2233;word-spacing:2px;">Page 1</div>
<div class="t" style="left:1375.6px;top:976.30px;font-size:16.6px;color:#1e2233;">of 1</div>
<div class="r" style="left:1415px;top:975px;width:1.5px;height:19px;background:#6a7084;"></div>
<div class="t" style="left:1436.3px;top:976.30px;font-size:16.6px;color:#8b90a0;">Next</div>
<svg class="r" style="left:1490px;top:972px;" width="18" height="22" viewBox="0 0 18 22"><path d="M6 4.5 L13 11 L6 17.5" fill="none" stroke="#4b5166" stroke-width="1.6" stroke-linecap="round" stroke-linejoin="round"/></svg>
</div>
</body></html>
